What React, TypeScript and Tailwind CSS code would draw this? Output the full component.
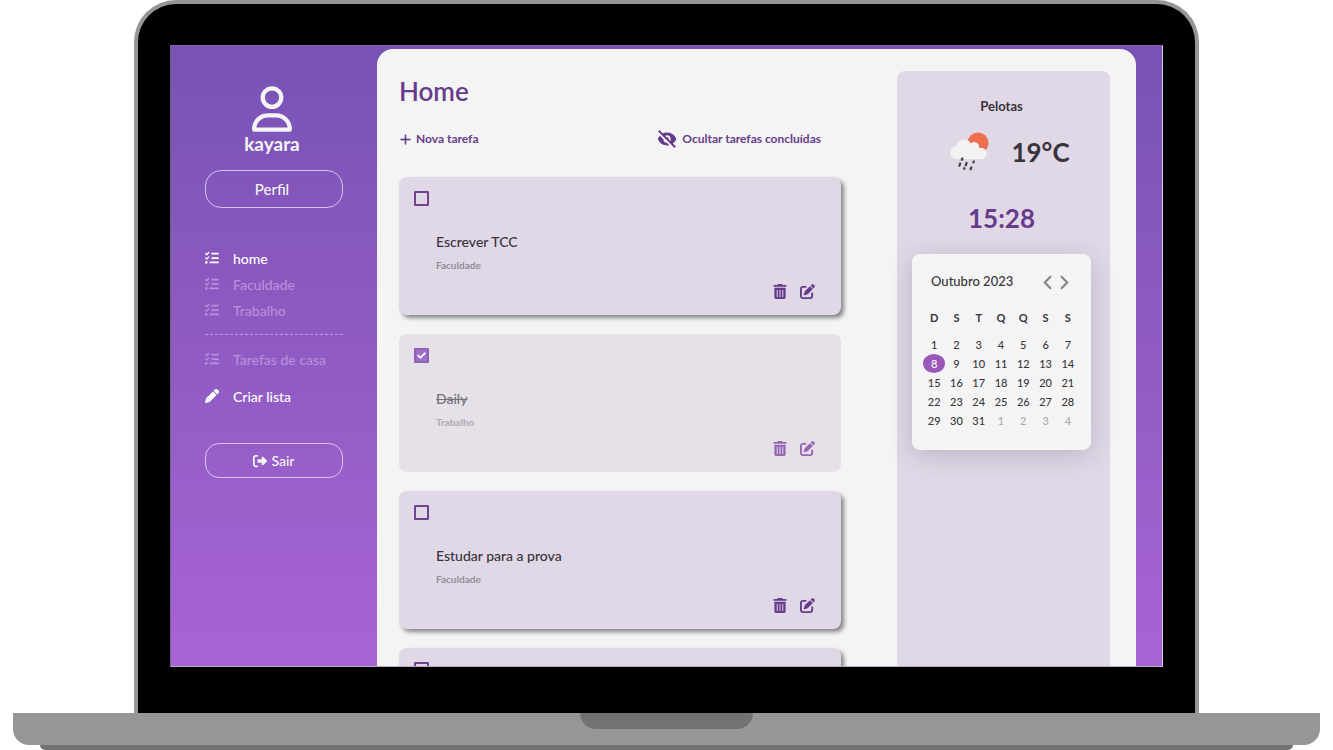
import { useState } from "react";
import {
  FaListCheck,
  FaPen,
  FaPenToSquare,
  FaRegUser,
  FaRightFromBracket,
  FaTrashCan,
  FaCheck,
  FaChevronLeft,
  FaChevronRight,
} from "react-icons/fa6";
import { BiSolidHide } from "react-icons/bi";
import { BsPlusLg } from "react-icons/bs";

type Task = { title: string; list: string; done: boolean };

const initialTasks: Task[] = [
  { title: "Escrever TCC", list: "Faculdade", done: false },
  { title: "Daily", list: "Trabalho", done: true },
  { title: "Estudar para a prova", list: "Faculdade", done: false },
  { title: "", list: "", done: false },
];

const weekDays = ["D", "S", "T", "Q", "Q", "S", "S"];
const weeks = [0, 1, 2, 3, 4].map((w) => [1, 2, 3, 4, 5, 6, 7].map((d) => w * 7 + d));

function ListLink({ label, active = false }: { label: string; active?: boolean }) {
  return (
    <a
      href="#"
      className={
        active
          ? "flex h-[26px] items-center gap-[14px] text-white"
          : "flex h-[26px] items-center gap-[14px] text-[#b98fdb]"
      }
    >
      <FaListCheck className="size-[14px]" />
      {label}
    </a>
  );
}

function Sidebar() {
  return (
    <aside className="flex w-[206px] shrink-0 flex-col px-[34px] text-[14px] font-medium text-[#f4f4f4]">
      <div className="mt-10 flex flex-col items-center pr-1">
        <FaRegUser className="h-[46px] w-10" />
        <span className="text-[19px] leading-6 font-bold">kayara</span>
      </div>
      <button className="mt-[14px] h-[38px] rounded-[16px] border border-[#d5c3ea] pr-1 text-[15px]">
        Perfil
      </button>
      <nav className="mt-[37px] flex flex-col">
        <ListLink label="home" active />
        <ListLink label="Faculdade" />
        <ListLink label="Trabalho" />
        <hr className="mt-[11px] mb-[11px] border-0 border-t border-dashed border-[#c29ae3]" />
        <ListLink label="Tarefas de casa" />
        <a href="#" className="mt-[11px] flex h-[26px] items-center gap-[14px] text-white">
          <FaPen className="size-[14px]" />
          Criar lista
        </a>
      </nav>
      <button className="mt-[34px] flex h-[35px] items-center justify-center gap-1 rounded-[14px] border border-[#dcc6f0]">
        <FaRightFromBracket className="size-[14px]" />
        Sair
      </button>
    </aside>
  );
}

function TaskCard({ task, onToggle }: { task: Task; onToggle: () => void }) {
  return (
    <article
      className={
        task.done
          ? "flex h-[138px] shrink-0 flex-col rounded-lg bg-[#e6e1e9] pr-[26px] pl-[15px]"
          : "flex h-[138px] shrink-0 flex-col rounded-lg bg-[#e0d8e6] pr-[26px] pl-[15px] shadow-[3px_3px_4px_rgba(0,0,0,0.45)]"
      }
    >
      <label className="relative mt-[14px] size-[15px]">
        <input
          type="checkbox"
          aria-label={task.title || "Tarefa"}
          checked={task.done}
          onChange={onToggle}
          className="block size-[15px] appearance-none rounded-[1px] border-2 border-[#6f4591] checked:border-[#9060b4] checked:bg-[#9d6fcb]"
        />
        {task.done && (
          <FaCheck
            stroke="currentColor"
            strokeWidth={50}
            className="absolute top-[3px] left-[3px] size-[9px] text-white"
          />
        )}
      </label>
      <div className="mt-[26px] h-[46px] pl-[22px]">
        <h2
          className={
            task.done
              ? "text-[14px] leading-5 font-medium text-[#777279] line-through"
              : "text-[14px] leading-5 font-medium text-[#38343b]"
          }
        >
          {task.title}
        </h2>
        <p
          className={
            task.done
              ? "mt-[3px] text-[10px] leading-5 font-bold text-[#b1aab4]"
              : "mt-[3px] text-[10px] leading-5 font-bold text-[#938b99]"
          }
        >
          {task.list}
        </p>
      </div>
      <div
        className={
          task.done
            ? "mt-[6px] flex justify-end gap-[13px] text-[#9668b4]"
            : "mt-[6px] flex justify-end gap-[13px] text-[#673b8b]"
        }
      >
        <button aria-label="Excluir tarefa">
          <FaTrashCan className="h-[15px] w-[14px]" />
        </button>
        <button aria-label="Editar tarefa">
          <FaPenToSquare className="h-[15px] w-[15px]" />
        </button>
      </div>
    </article>
  );
}

function WeatherIcon() {
  return (
    <svg viewBox="0 0 42 40" className="h-10 w-[42px]" aria-hidden="true">
      <circle cx="29" cy="11" r="10.5" fill="#ee6f4d" />
      <path
        d="M8 27a6.500 6.500 0 0 1-.4-13A7.700 7.700 0 0 1 22 11.500a4.800 4.800 0 0 1 8 4.500A5.600 5.600 0 0 1 33.500 27Z"
        fill="#f4f3f4"
      />
      <path
        d="M13.400 26.500l-.5 1.200M11.200 31.500l-.8 2.200M17.600 31l-.9 2.300M24.800 29.500l-.3.800M15.400 36.300l-.2.500M22.300 35.500l-.7 1.800"
        stroke="#48424d"
        strokeWidth="2.300"
        strokeLinecap="round"
      />
    </svg>
  );
}

function Calendar() {
  return (
    <section className="mt-4 h-[196px] rounded-lg bg-[#f4f4f4] px-[11px] pt-[17px] text-[#38343b] shadow-[0_5px_25px_rgba(70,45,90,0.22)]">
      <div className="flex h-[22px] items-center justify-between pr-[10px] pl-2">
        <h2 className="text-[13px] font-medium">Outubro 2023</h2>
        <div className="flex gap-[2px] text-[#858585]">
          <button aria-label="Mês anterior">
            <FaChevronLeft stroke="currentColor" strokeWidth={16} className="h-[15px] w-[13px]" />
          </button>
          <button aria-label="Próximo mês">
            <FaChevronRight stroke="currentColor" strokeWidth={16} className="h-[15px] w-[13px]" />
          </button>
        </div>
      </div>
      <table className="mt-[15px] w-[156px] table-fixed border-collapse text-center text-[11px]">
        <thead>
          <tr className="h-5">
            {weekDays.map((d, i) => (
              <th key={i} className="p-0 font-bold">
                {d}
              </th>
            ))}
          </tr>
          <tr className="h-[7px]">
            <td colSpan={7} className="p-0" />
          </tr>
        </thead>
        <tbody>
          {weeks.map((week, w) => (
            <tr key={w} className="leading-[19px] font-medium">
              {week.map((n) => (
                <td key={n} className="p-0">
                  <span
                    className={
                      n === 8
                        ? "block rounded-[50%] bg-[#9958b8] text-white"
                        : n > 31
                          ? "block text-[#aaaaaa]"
                          : "block"
                    }
                  >
                    {n > 31 ? n - 31 : n}
                  </span>
                </td>
              ))}
            </tr>
          ))}
        </tbody>
      </table>
    </section>
  );
}

function InfoPanel() {
  return (
    <aside className="flex w-[213px] shrink-0 flex-col rounded-t-lg bg-[#e0d8e6] pr-[19px] pl-[15px]">
      <p className="mt-[25px] text-center text-[13px] leading-5 font-bold text-[#38343b]">Pelotas</p>
      <div className="mt-4 flex h-10 items-center justify-center gap-5 pl-4">
        <WeatherIcon />
        <span className="text-[26px] leading-10 font-bold text-[#38343b]">19°C</span>
      </div>
      <p className="mt-[26px] text-center text-[26px] leading-10 font-bold text-[#673b8b]">15:28</p>
      <Calendar />
    </aside>
  );
}

export default function App() {
  const [tasks, setTasks] = useState(initialTasks);
  const toggle = (index: number) =>
    setTasks(tasks.map((t, i) => (i === index ? { ...t, done: !t.done } : t)));

  return (
    <div className="flex h-screen flex-col items-center overflow-hidden bg-white font-['Lato',sans-serif]">
      <div className="flex min-h-0 w-[79.9%] flex-1 flex-col rounded-t-[42px] border-4 border-b-0 border-[#969696] bg-black px-8 pt-[41px] pb-[46px]">
        <div className="flex min-h-0 flex-1 overflow-hidden border border-t-[#8064a4] border-r-[#d8cce8] border-b-[#b9a8c9] border-l-[#70618a] bg-linear-to-b from-[#7852b4] to-[#a864d3]">
          <Sidebar />
          <main className="mt-[3px] mr-[26px] flex min-w-0 flex-1 gap-14 overflow-hidden rounded-t-[16px] bg-[#f4f4f4] pt-[22px] pr-[26px] pl-[22px]">
            <div className="flex min-w-0 flex-1 flex-col">
              <h1 className="text-[26px] leading-10 font-semibold text-[#673b8b]">Home</h1>
              <div className="mt-[17px] flex items-center justify-between pr-5 text-[12px] leading-5 font-bold text-[#673b8b]">
                <button className="flex items-center gap-1">
                  <BsPlusLg stroke="currentColor" strokeWidth={1} className="size-[13px]" />
                  Nova tarefa
                </button>
                <button className="flex items-center gap-1">
                  <BiSolidHide className="size-[22px]" />
                  Ocultar tarefas concluídas
                </button>
              </div>
              <div className="mt-[27px] flex flex-col gap-[19px]">
                {tasks.map((task, i) => (
                  <TaskCard key={i} task={task} onToggle={() => toggle(i)} />
                ))}
              </div>
            </div>
            <InfoPanel />
          </main>
        </div>
      </div>
      <div className="flex h-8 w-[98%] shrink-0 justify-center rounded-b-[16px] bg-[#969696]">
        <div className="h-4 w-[173px] rounded-b-[16px] bg-[#727272]" />
      </div>
      <div className="h-[5px] w-[94%] shrink-0 rounded-b-[5px] bg-[#727272]" />
    </div>
  );
}
